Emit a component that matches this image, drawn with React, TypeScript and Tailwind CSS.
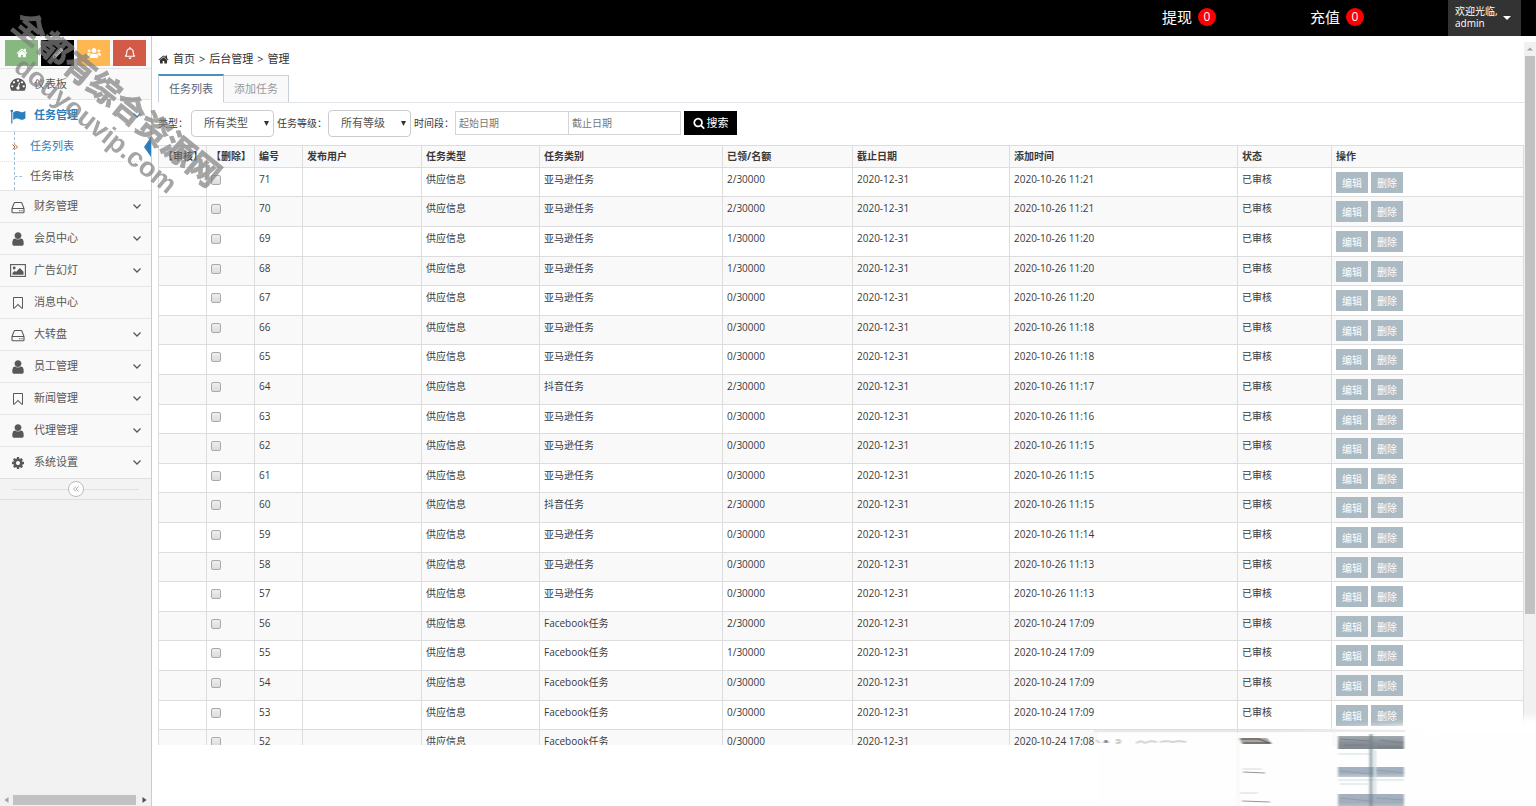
import type { ReactNode } from 'react'
import { FaPencilAlt, FaRegBell, FaUsers } from 'react-icons/fa'

const paths = {
  home: 'M1472 992v480q0 26-19 45t-45 19h-384v-384h-256v384h-384q-26 0-45-19t-19-45v-480q0-1 .5-3t.5-3l575-474 575 474q1 2 1 6zm223-69l-62 74q-8 9-21 11h-3q-13 0-21-7l-692-577-692 577q-12 8-24 7-13-2-21-11l-62-74q-8-10-7-23.5t11-21.5l719-599q32-26 76-26t76 26l244 204v-195q0-14 9-23t23-9h192q14 0 23 9t9 23v408l219 182q10 8 11 21.5t-7 23.5z',
  dashboard:
    'M384 1152q0-53-37.5-90.5t-90.5-37.5-90.5 37.5-37.5 90.5 37.5 90.5 90.5 37.5 90.5-37.5 37.5-90.5zm192-448q0-53-37.5-90.5t-90.5-37.5-90.5 37.5-37.5 90.5 37.5 90.5 90.5 37.5 90.5-37.5 37.5-90.5zm428 481l101-382q6-26-7.5-48.5t-38.5-29.5-48 6.5-30 39.5l-101 382q-60 5-107 43.5t-63 98.5q-20 77 20 146t117 89 146-20 89-117q16-60-6-117t-72-91zm660-33q0-53-37.5-90.5t-90.5-37.5-90.5 37.5-37.5 90.5 37.5 90.5 90.5 37.5 90.5-37.5 37.5-90.5zm-640-640q0-53-37.5-90.5t-90.5-37.5-90.5 37.5-37.5 90.5 37.5 90.5 90.5 37.5 90.5-37.5 37.5-90.5zm448 192q0-53-37.5-90.5t-90.5-37.5-90.5 37.5-37.5 90.5 37.5 90.5 90.5 37.5 90.5-37.5 37.5-90.5zm320 448q0 261-141 483-19 29-54 29h-1402q-35 0-54-29-141-221-141-483 0-182 71-348t191-286 286-191 348-71 348 71 286 191 191 286 71 348z',
  user: 'M1536 1399q0 109-62.5 187t-150.5 78h-854q-88 0-150.5-78t-62.5-187q0-85 8.5-160.5t31.5-152 58.5-131 94-89 134.5-34.5q131 128 313 128t313-128q76 0 134.5 34.5t94 89 58.5 131 31.5 152 8.5 160.5zm-256-887q0 159-112.5 271.5t-271.5 112.5-271.5-112.5-112.5-271.5 112.5-271.5 271.5-112.5 271.5 112.5 112.5 271.5z',
  cog: 'M1152 896q0-106-75-181t-181-75-181 75-75 181 75 181 181 75 181-75 75-181zm512-109v222q0 12-8 23t-20 13l-185 28q-19 54-39 91 35 50 107 138 10 12 10 25t-9 23q-27 37-99 108t-94 71q-12 0-26-9l-138-108q-44 23-91 38-16 136-29 186-7 28-36 28h-222q-14 0-24.5-8.5t-11.5-21.5l-28-184q-49-16-90-37l-141 107q-10 9-25 9-14 0-25-11-126-114-165-168-7-10-7-23 0-12 8-23 15-21 51-66.5t54-70.5q-27-50-41-99l-183-27q-13-2-21-12.5t-8-23.5v-222q0-12 8-23t19-13l186-28q14-46 39-92-40-57-107-138-10-12-10-24 0-10 9-23 26-36 98.5-107.5t94.5-71.5q13 0 26 10l138 107q44-23 91-38 16-136 29-186 7-28 36-28h222q14 0 24.5 8.5t11.5 21.5l28 184q49 16 90 37l142-107q9-9 24-9 13 0 25 10 129 119 165 170 7 8 7 22 0 12-8 23-15 21-51 66.5t-54 70.5q26 50 41 98l183 28q13 2 21 12.5t8 23.5z',
  bookmark:
    'M1408 256h-1024v1242l423-406 89-85 89 85 423 406v-1242zm12-128q23 0 44 9 33 13 52.5 41t19.5 62v1289q0 34-19.5 62t-52.5 41q-19 8-44 8-48 0-83-32l-441-424-441 424q-36 33-83 33-23 0-44-9-33-13-52.5-41t-19.5-62v-1289q0-34 19.5-62t52.5-41q21-9 44-9h1048z',
  search:
    'M1216 832q0-185-131.5-316.5t-316.5-131.5-316.5 131.5-131.5 316.5 131.5 316.5 316.5 131.5 316.5-131.5 131.5-316.5zm512 832q0 52-38 90t-90 38q-54 0-90-38l-343-342q-179 124-399 124-143 0-273.5-55.5t-225-150-150-225-55.5-273.5 55.5-273.5 150-225 225-150 273.5-55.5 273.5 55.5 225 150 150 225 55.5 273.5q0 220-124 399l343 343q37 37 37 90z',
  down: 'M1395 736q0 13-10 23l-466 466q-10 10-23 10t-23-10l-466-466q-10-10-10-23t10-23l50-50q10-10 23-10t23 10l393 393 393-393q10-10 23-10t23 10l50 50q10 10 10 23z',
}

function Icon({ name, className }: { name: keyof typeof paths; className: string }) {
  return (
    <svg viewBox="0 0 1792 1792" fill="currentColor" className={className} aria-hidden="true">
      <path d={paths[name]} />
    </svg>
  )
}

function Chevron() {
  return (
    <svg viewBox="0 0 8 5" fill="none" stroke="currentColor" strokeWidth="1.3" className="h-[5px] w-2" aria-hidden="true">
      <path d="M.5.5 4 4 7.500.5" />
    </svg>
  )
}

function FlagIcon() {
  return (
    <svg viewBox="0 0 16 16" fill="currentColor" className="size-4" aria-hidden="true">
      <circle cx="1.8" cy="3" r="1.3" />
      <path d="M1.2 3h1.2v12.5H1.2zM3.2 4.4c1.600-1 2.700-1.400 4-1.400 2 0 2.800 1.200 4.500 1.200 1.300 0 2.300-.5 3.700-1.300v7.600c-1.300.8-2.300 1.300-3.700 1.300-2 0-2.700-1.300-4.600-1.300-1.400 0-2.500.5-3.900 1.400z" />
    </svg>
  )
}

function DiskIcon() {
  return (
    <svg viewBox="0 0 16 16" fill="none" stroke="currentColor" strokeWidth="1.1" className="size-4" aria-hidden="true">
      <path d="M2 9.500 4 4.400c.2-.6.6-.9 1.200-.9h5.600c.6 0 1 .3 1.200.9L14 9.500v3.400c0 .5-.4.9-.9.9H2.900c-.5 0-.9-.4-.9-.9V9.500Zm0 0h12" />
      <path d="M9 11.700h1.400M11.400 11.700h1.400" />
    </svg>
  )
}

function PictureIcon() {
  return (
    <svg viewBox="0 0 16 13" className="h-[13px] w-4" aria-hidden="true">
      <rect x=".6" y=".6" width="14.800" height="11.800" fill="none" stroke="currentColor" strokeWidth="1.100" />
      <circle cx="4.200" cy="4" r="1.400" fill="currentColor" />
      <path d="M2.500 10.800V9l2.300-2.300L6 7.900 9.800 4l3.700 3.700v3.100z" fill="currentColor" />
    </svg>
  )
}

const menu: { label: string; icon: ReactNode; open?: boolean }[] = [
  { label: '财务管理', icon: <DiskIcon />, open: true },
  { label: '会员中心', icon: <Icon name="user" className="size-4" />, open: true },
  { label: '广告幻灯', icon: <PictureIcon />, open: true },
  { label: '消息中心', icon: <Icon name="bookmark" className="size-[14px]" /> },
  { label: '大转盘', icon: <DiskIcon />, open: true },
  { label: '员工管理', icon: <Icon name="user" className="size-4" />, open: true },
  { label: '新闻管理', icon: <Icon name="bookmark" className="size-[14px]" />, open: true },
  { label: '代理管理', icon: <Icon name="user" className="size-4" />, open: true },
  { label: '系统设置', icon: <Icon name="cog" className="size-[14px]" />, open: true },
]

const amazon = '亚马逊任务'
const rows = [
  [71, amazon, 2, '26 11:21'],
  [70, amazon, 2, '26 11:21'],
  [69, amazon, 1, '26 11:20'],
  [68, amazon, 1, '26 11:20'],
  [67, amazon, 0, '26 11:20'],
  [66, amazon, 0, '26 11:18'],
  [65, amazon, 0, '26 11:18'],
  [64, '抖音任务', 2, '26 11:17'],
  [63, amazon, 0, '26 11:16'],
  [62, amazon, 0, '26 11:15'],
  [61, amazon, 0, '26 11:15'],
  [60, '抖音任务', 2, '26 11:15'],
  [59, amazon, 0, '26 11:14'],
  [58, amazon, 0, '26 11:13'],
  [57, amazon, 0, '26 11:13'],
  [56, 'Facebook任务', 2, '24 17:09'],
  [55, 'Facebook任务', 1, '24 17:09'],
  [54, 'Facebook任务', 0, '24 17:09'],
  [53, 'Facebook任务', 0, '24 17:09'],
  [52, 'Facebook任务', 0, '24 17:08'],
]

const columns = [
  { title: '【审核】', width: 'w-12' },
  { title: '【删除】', width: 'w-12' },
  { title: '编号', width: 'w-12' },
  { title: '发布用户', width: 'w-[119px]' },
  { title: '任务类型', width: 'w-[118px]' },
  { title: '任务类别', width: 'w-[183px]' },
  { title: '已领/名额', width: 'w-[130px]' },
  { title: '截止日期', width: 'w-[157px]' },
  { title: '添加时间', width: 'w-[228px]' },
  { title: '状态', width: 'w-[94px]' },
  { title: '操作', width: '' },
]

function Counter({ label }: { label: string }) {
  return (
    <a href="#" className="flex w-[148px] items-center gap-1.5 text-[15px] leading-5">
      {label}
      <span className="flex size-[18px] items-center justify-center rounded-full bg-[#f00] text-xs">0</span>
    </a>
  )
}

function Header() {
  return (
    <header className="flex h-9 shrink-0 justify-end bg-black pr-[15px] text-white">
      <div className="flex pb-0.5">
        <Counter label="提现" />
        <Counter label="充值" />
      </div>
      <button type="button" className="-ml-[10px] flex w-[73px] items-center justify-between bg-[#333] pr-[10px] pb-0.5 pl-[7px] text-left text-[10px] leading-3">
        <span>
          欢迎光临,
          <br />
          admin
        </span>
        <svg viewBox="0 0 8 4" className="mt-0.5 h-1 w-2" fill="currentColor" aria-hidden="true">
          <path d="M0 0h8L4 4z" />
        </svg>
      </button>
    </header>
  )
}

function Sidebar() {
  return (
    <aside className="flex w-[152px] shrink-0 flex-col border-r border-[#ccc] bg-[#f2f2f2] text-[11px] text-[#585858]">
      <div className="grid h-8 grid-cols-4 gap-[3px] bg-[#fafafa] px-[5px] pt-1 pb-0.5 text-white">
        <button type="button" aria-label="首页" className="flex items-center justify-center bg-[#87b87f]">
          <Icon name="home" className="size-3" />
        </button>
        <button type="button" aria-label="编辑" className="flex items-center justify-center bg-black">
          <FaPencilAlt className="size-[10px]" />
        </button>
        <button type="button" aria-label="会员" className="flex items-center justify-center bg-[#ffb752]">
          <FaUsers className="size-[14px]" />
        </button>
        <button type="button" aria-label="通知" className="flex items-center justify-center bg-[#d15b47]">
          <FaRegBell className="size-3" />
        </button>
      </div>
      <nav>
        <a href="#" className="flex h-[31px] items-center border-t border-[#e5e5e5] bg-[#f9f9f9] pl-[10px]">
          <Icon name="dashboard" className="mr-2 size-4" />
          仪表板
        </a>
        <a href="#" className="flex h-8 items-center border-t border-[#e5e5e5] bg-white pr-[10px] pl-[10px] font-bold text-[#2b7dbc]">
          <span className="mr-2">
            <FlagIcon />
          </span>
          <span className="flex-1">任务管理</span>
          <Chevron />
        </a>
        <div className="relative border-t border-[#e5e5e5] bg-white">
          <span className="absolute top-0 bottom-0 left-[14px] border-l border-dashed border-[#9dbdd6]" />
          <svg viewBox="0 0 7 20" className="absolute top-[5px] right-0 h-5 w-[7px] text-[#2b7dbc]" fill="currentColor" aria-hidden="true">
            <path d="M7 0v20L0 10z" />
          </svg>
          <a href="#" className="flex h-[29px] items-center pl-3 text-[#2b7dbc]">
            <svg viewBox="0 0 6 6" className="relative mr-3 size-1.5" fill="none" stroke="#c86139" aria-hidden="true">
              <path d="M.5.5 3 3 .5 5.500M3 .5 5.500 3 3 5.500" />
            </svg>
            任务列表
          </a>
          <a href="#" className="flex h-[29px] items-center border-t border-dotted border-[#e4e4e4] pl-[15px]">
            <span className="mr-2 w-[7px] border-t border-dashed border-[#9dbdd6]" />
            任务审核
          </a>
        </div>
        {menu.map((item) => (
          <a key={item.label} href="#" className="flex h-8 items-center border-t border-[#e5e5e5] bg-[#f9f9f9] px-[10px]">
            <span className="mr-2 flex w-4 justify-center">{item.icon}</span>
            <span className="flex-1">{item.label}</span>
            {item.open && <Chevron />}
          </a>
        ))}
      </nav>
      <div className="flex h-[22px] items-center border-y border-[#e0e0e0] bg-[#f3f3f3] px-3">
        <span className="flex-1 border-t border-[#e0e0e0]" />
        <button type="button" aria-label="收起菜单" className="flex size-4 items-center justify-center rounded-full border border-[#bbb] bg-white text-[#aaa]">
          <svg viewBox="0 0 6 6" className="size-1.5" fill="none" stroke="currentColor" aria-hidden="true">
            <path d="M3 .5.5 3 3 5.500M5.500.5 3 3l2.500 2.500" />
          </svg>
        </button>
        <span className="flex-1 border-t border-[#e0e0e0]" />
      </div>
      <div className="mt-auto flex h-[13px] items-center gap-1 bg-[#f1f1f1] px-1">
        <svg viewBox="0 0 4 6" className="h-1.5 w-[5px]" fill="#a3a3a3" aria-hidden="true">
          <path d="M4 0v6L0 3z" />
        </svg>
        <div className="h-[10px] flex-1 bg-[#c1c1c1]" />
        <svg viewBox="0 0 4 6" className="ml-0.5 h-1.5 w-[5px]" fill="#505050" aria-hidden="true">
          <path d="M0 0v6l4-3z" />
        </svg>
      </div>
    </aside>
  )
}

function Select({ id, label }: { id: string; label: string }) {
  return (
    <div className="relative mr-[3px]">
      <select id={id} className="block h-[27px] w-[83px] appearance-none rounded border border-[#ccc] bg-white pl-3 text-[11px] text-[#555]">
        <option>{label}</option>
      </select>
      <svg viewBox="0 0 5 5" className="pointer-events-none absolute top-[11px] right-[5px] size-[5px]" fill="#333" aria-hidden="true">
        <path d="M0 0h5L2.500 5z" />
      </svg>
    </div>
  )
}

function Filters() {
  return (
    <form className="flex h-[42px] items-center pb-0.5 text-[10px] text-[#393939]">
      <label htmlFor="type" className="w-[33px]">
        类型：
      </label>
      <Select id="type" label="所有类型" />
      <label htmlFor="level" className="w-[51px]">
        任务等级：
      </label>
      <Select id="level" label="所有等级" />
      <label htmlFor="start" className="w-[41px]">
        时间段：
      </label>
      <input id="start" placeholder="起始日期" className="h-6 w-[114px] border border-[#d5d5d5] px-[3px] placeholder:text-[#777]" />
      <input aria-label="截止日期" placeholder="截止日期" className="mr-[3px] -ml-px h-6 w-[113px] border border-[#d5d5d5] px-[3px] placeholder:text-[#777]" />
      <button type="button" className="flex h-6 w-[53px] items-center justify-center gap-0.5 bg-black text-[11px] text-white">
        <Icon name="search" className="size-3" />
        搜索
      </button>
    </form>
  )
}

function TaskTable() {
  return (
    <table className="w-full table-fixed border-collapse border border-[#ddd] text-[10px] leading-[15px] text-[#393939]">
      <thead>
        <tr className="h-[22px] bg-[#f9f9f9]">
          {columns.map((col) => (
            <th key={col.title} className={`${col.width} border border-[#ddd] px-1 text-left font-bold whitespace-nowrap`}>
              {col.title}
            </th>
          ))}
        </tr>
      </thead>
      <tbody className="[&_td]:border [&_td]:border-[#ddd] [&_td]:px-1 [&_td]:pt-1 [&_td]:align-top">
        {rows.map(([id, kind, taken, added]) => (
          <tr key={id} className="h-[30px] even:bg-[#f9f9f9] nth-[5n+1]:h-[29px] nth-[5n+4]:h-[29px]">
            <td />
            <td>
              <input
                type="checkbox"
                aria-label={`删除 ${id}`}
                className="mt-[3px] block size-[10px] appearance-none rounded-xs border border-[#aaa] bg-linear-to-b from-[#eee] to-[#dcdcdc]"
              />
            </td>
            <td>{id}</td>
            <td />
            <td>供应信息</td>
            <td>{kind}</td>
            <td>{taken}/30000</td>
            <td>2020-12-31</td>
            <td>2020-10-{added}</td>
            <td>已审核</td>
            <td>
              <div className="flex gap-[3px]">
                <button type="button" className="h-[21px] w-8 bg-[#abbac3] pt-0.5 text-white">
                  编辑
                </button>
                <button type="button" className="h-[21px] w-8 bg-[#abbac3] pt-0.5 text-white">
                  删除
                </button>
              </div>
            </td>
          </tr>
        ))}
      </tbody>
    </table>
  )
}

// Smudged patch that fades out the lower right corner
function Smudge() {
  return (
    <svg viewBox="0 0 476 96" className="pointer-events-none absolute right-0 bottom-0 h-24 w-[476px]" aria-hidden="true">
      <defs>
        <filter id="soft" x="-20%" y="-20%" width="140%" height="140%">
          <feGaussianBlur stdDeviation="0.8 0.6" />
        </filter>
        <filter id="fade" x="-20%" y="-20%" width="140%" height="140%">
          <feGaussianBlur stdDeviation="3" />
        </filter>
        <linearGradient id="dark" x2="0" y2="1">
          <stop offset="0" stopColor="#a3abb0" />
          <stop offset=".5" stopColor="#899097" />
          <stop offset="1" stopColor="#7f868c" />
        </linearGradient>
        <linearGradient id="pale" x2="0" y2="1">
          <stop offset="0" stopColor="#a3b1bf" />
          <stop offset=".6" stopColor="#a2adbb" />
          <stop offset="1" stopColor="#c0cbd2" />
        </linearGradient>
      </defs>
      <path d="M100 30H176L270 20 360 14 490 6V120H100z" fill="#fff" filter="url(#fade)" />
      <path d="M38 23h440v80H38z" fill="#fefefe" />
      <path d="M34 21h311" stroke="#d8d8d8" />
      <g filter="url(#soft)">
        <path d="M36 30l4 3M43 33l3-3 3 3M56 30h4v3h-4" stroke="#999" fill="none" />
        <path d="M46 30v3" stroke="#557" strokeWidth="2" />
        <path d="M76 33l5-2 4 2 6-2 6 1M100 32l6-1 7 1 6-1 7 1" stroke="#d5d5d5" strokeWidth="2" fill="none" />
        <path d="M179 28h28l5 6h-30z" fill="#a9a6a0" />
        <path d="M181 29h18l10 4M183 33h28" stroke="#4d4945" fill="none" />
        <path d="M183 62l22 1M182 91l28 1" stroke="#9a958e" />
        <path d="M182 59h20M180 83h18" stroke="#d5d8e4" />
        <path d="M278 26h66v13h-66z" fill="url(#dark)" />
        <path d="M280 29l30 2M320 30l24 3M284 35h24M318 37h24" stroke="#6d7378" opacity=".6" />
        <path d="M278 57h66v10h-66z" fill="url(#pale)" />
        <path d="M280 61l30 3M316 60l28 3" stroke="#8794a6" opacity=".6" />
        <path d="M278 84h66v14h-66z" fill="url(#pale)" />
        <path d="M280 88l30 3M316 88l28 2" stroke="#8594a0" opacity=".6" />
        <path d="M278 44h32M278 70h66M280 74h28" stroke="#cfdcdf" />
        <path d="M311 24v72" stroke="#71808a" strokeWidth="3" opacity=".7" />
        <path d="M315 40v44" stroke="#cfe0e6" strokeWidth="2" />
        <path d="M178 24v72M274 16v20" stroke="#eee" />
      </g>
    </svg>
  )
}

export default function App() {
  return (
    <div className="relative flex h-screen flex-col overflow-hidden bg-white font-['Open_Sans','Noto_Sans_CJK_SC',sans-serif]">
      <Header />
      <div className="flex min-h-0 flex-1">
        <Sidebar />
        <main className="flex min-w-0 flex-1 flex-col pb-[61px] pl-1.5">
          <div className="flex h-[38px] shrink-0 items-center gap-1 pt-2 text-[11px] text-[#333]">
            <Icon name="home" className="size-[11px]" />
            <a href="#">首页</a>
            <span>&gt;</span>
            <a href="#">后台管理</a>
            <span>&gt;</span>
            <span>管理</span>
          </div>
          <div className="flex h-[29px] shrink-0 border-b border-[#dfe5ea] text-[11px]">
            <button type="button" className="-mb-px w-[66px] border border-t-2 border-[#c5d0dc] border-t-[#4c8fbd] border-b-white bg-white text-[#576373]">
              任务列表
            </button>
            <button type="button" className="mt-px w-[65px] border border-b-0 border-l-0 border-[#c5d0dc] bg-[#f9f9f9] text-[#999]">
              添加任务
            </button>
          </div>
          <Filters />
          <div className="min-h-0 flex-1 overflow-hidden">
            <TaskTable />
          </div>
        </main>
        <div className="mt-1.5 flex w-3 shrink-0 flex-col items-center bg-[#f1f1f1] px-px">
          <svg viewBox="0 0 6 3" className="my-[5px] h-1 w-1.5" fill="#a3a3a3" aria-hidden="true">
            <path d="M0 3h6L3 0z" />
          </svg>
          <div className="h-[73%] w-full bg-[#c1c1c1]" />
        </div>
      </div>
      <Smudge />
      <div className="pointer-events-none absolute top-[78px] -left-[22px] w-[257px] rotate-[39deg] text-center leading-[34px] font-bold whitespace-nowrap text-[#808080] opacity-70">
        <div className="text-[32px] [-webkit-text-stroke:1px_#808080]">全都有综合资源网</div>
        <div className="font-['Liberation_Sans',sans-serif] text-[27px]">douyouvip.com</div>
      </div>
    </div>
  )
}
